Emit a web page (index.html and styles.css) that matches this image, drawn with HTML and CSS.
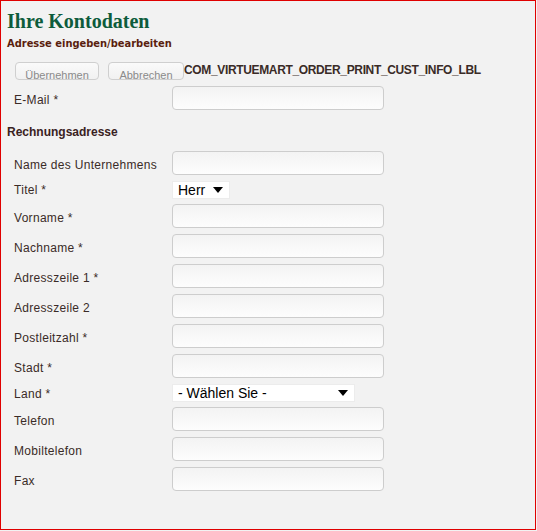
FILE: index.html
```html
<!DOCTYPE html>
<html lang="de">
<head>
<meta charset="utf-8">
<title>Ihre Kontodaten</title>
<link rel="stylesheet" href="styles.css">
</head>
<body>
<div class="frame">
  <h1 class="title">Ihre Kontodaten</h1>
  <h2 class="subtitle">Adresse eingeben/bearbeiten</h2>
  <div class="actions">
    <button class="btn btn-save" type="button">Übernehmen</button>
    <button class="btn btn-cancel" type="button">Abbrechen</button>
    <span class="lbl-key">COM_VIRTUEMART_ORDER_PRINT_CUST_INFO_LBL</span>
  </div>
  <div class="row first">
    <label class="label">E-Mail *</label>
    <div class="field"></div>
  </div>
  <h3 class="section">Rechnungsadresse</h3>
  <div class="row">
    <label class="label">Name des Unternehmens</label>
    <div class="field"></div>
  </div>
  <div class="row row-select row-titel">
    <label class="label">Titel *</label>
    <div class="select select-small"><span class="select-text">Herr</span><svg class="arrow" width="10" height="6" viewBox="0 0 10 6"><path d="M0 0H10L5 6Z" fill="#000"/></svg></div>
  </div>
  <div class="row">
    <label class="label">Vorname *</label>
    <div class="field"></div>
  </div>
  <div class="row">
    <label class="label">Nachname *</label>
    <div class="field"></div>
  </div>
  <div class="row">
    <label class="label">Adresszeile 1 *</label>
    <div class="field"></div>
  </div>
  <div class="row">
    <label class="label">Adresszeile 2</label>
    <div class="field"></div>
  </div>
  <div class="row">
    <label class="label">Postleitzahl *</label>
    <div class="field"></div>
  </div>
  <div class="row">
    <label class="label">Stadt *</label>
    <div class="field"></div>
  </div>
  <div class="row row-select row-land">
    <label class="label">Land *</label>
    <div class="select select-wide"><span class="select-text">- Wählen Sie -</span><svg class="arrow" width="10" height="6" viewBox="0 0 10 6"><path d="M0 0H10L5 6Z" fill="#000"/></svg></div>
  </div>
  <div class="row">
    <label class="label">Telefon</label>
    <div class="field"></div>
  </div>
  <div class="row">
    <label class="label">Mobiltelefon</label>
    <div class="field"></div>
  </div>
  <div class="row">
    <label class="label">Fax</label>
    <div class="field"></div>
  </div>
</div>
</body>
</html>
```
FILE: styles.css
```css
html, body {
  margin: 0;
  padding: 0;
  background: #f2f2f2;
}

.frame {
  box-sizing: border-box;
  width: 536px;
  height: 530px;
  border: 1px solid #e00000;
  background: #f2f2f2;
  padding: 0 6px;
  font-family: "Liberation Sans", Arial, sans-serif;
  color: #3a2b27;
}

.title {
  margin: 9px 0 0 0;
  font-family: "Liberation Serif", "Times New Roman", serif;
  font-weight: bold;
  font-size: 20px;
  line-height: 23px;
  color: #0d5c3c;
}

.subtitle {
  margin: 4px 0 0 0;
  font-family: "DejaVu Sans Condensed", "DejaVu Sans", sans-serif;
  font-stretch: condensed;
  font-weight: bold;
  font-size: 11px;
  line-height: 13px;
  color: #5a1e0e;
}

.actions {
  display: flex;
  align-items: flex-start;
  margin-top: 12px;
  padding-left: 8px;
  height: 18px;
}

.btn {
  box-sizing: border-box;
  height: 18px;
  margin: 0;
  padding: 6px 0 0 0;
  border: 1px solid #cfcfcf;
  border-radius: 4px;
  background: linear-gradient(#fafafa, #f1f1f1);
  font-family: "Liberation Sans", Arial, sans-serif;
  font-size: 11px;
  line-height: 12px;
  color: #8a8a8a;
  overflow: hidden;
  text-align: center;
}

.btn-save {
  width: 84px;
}

.btn-cancel {
  width: 76px;
  margin-left: 9px;
}

.lbl-key {
  margin-top: 1px;
  font-weight: bold;
  font-size: 12px;
  line-height: 14px;
  letter-spacing: -0.35px;
  color: #3a2b27;
}

.row {
  display: flex;
  align-items: center;
  height: 30px;
}

.row.first {
  margin-top: 3px;
}

.row-select {
  height: 23px;
}

.label {
  box-sizing: border-box;
  width: 158px;
  margin-left: 7px;
  padding-top: 4px;
  font-size: 12px;
  line-height: 14px;
  letter-spacing: 0.3px;
  color: #3a2b27;
}

.row-titel .label {
  padding-top: 0;
}

.row-land .label {
  padding-top: 2px;
}

.field {
  box-sizing: border-box;
  width: 212px;
  height: 24px;
  border: 1px solid #cdcdcd;
  border-radius: 4px;
  background: linear-gradient(#f3f3f3, #fdfdfd);
}

.section {
  margin: 12px 0 9px 0;
  font-size: 12px;
  line-height: 14px;
  font-weight: bold;
  color: #3a2222;
}

.select {
  box-sizing: border-box;
  display: flex;
  align-items: center;
  height: 18px;
  padding: 0 6px 0 5px;
  background: #ffffff;
  border: 1px solid #ececec;
  font-size: 14px;
  line-height: 16px;
  color: #000;
}

.select-small {
  width: 58px;
}

.select-wide {
  width: 183px;
}

.select-text {
  flex: 1;
  white-space: nowrap;
}

.arrow {
  display: block;
  flex: none;
}
```
